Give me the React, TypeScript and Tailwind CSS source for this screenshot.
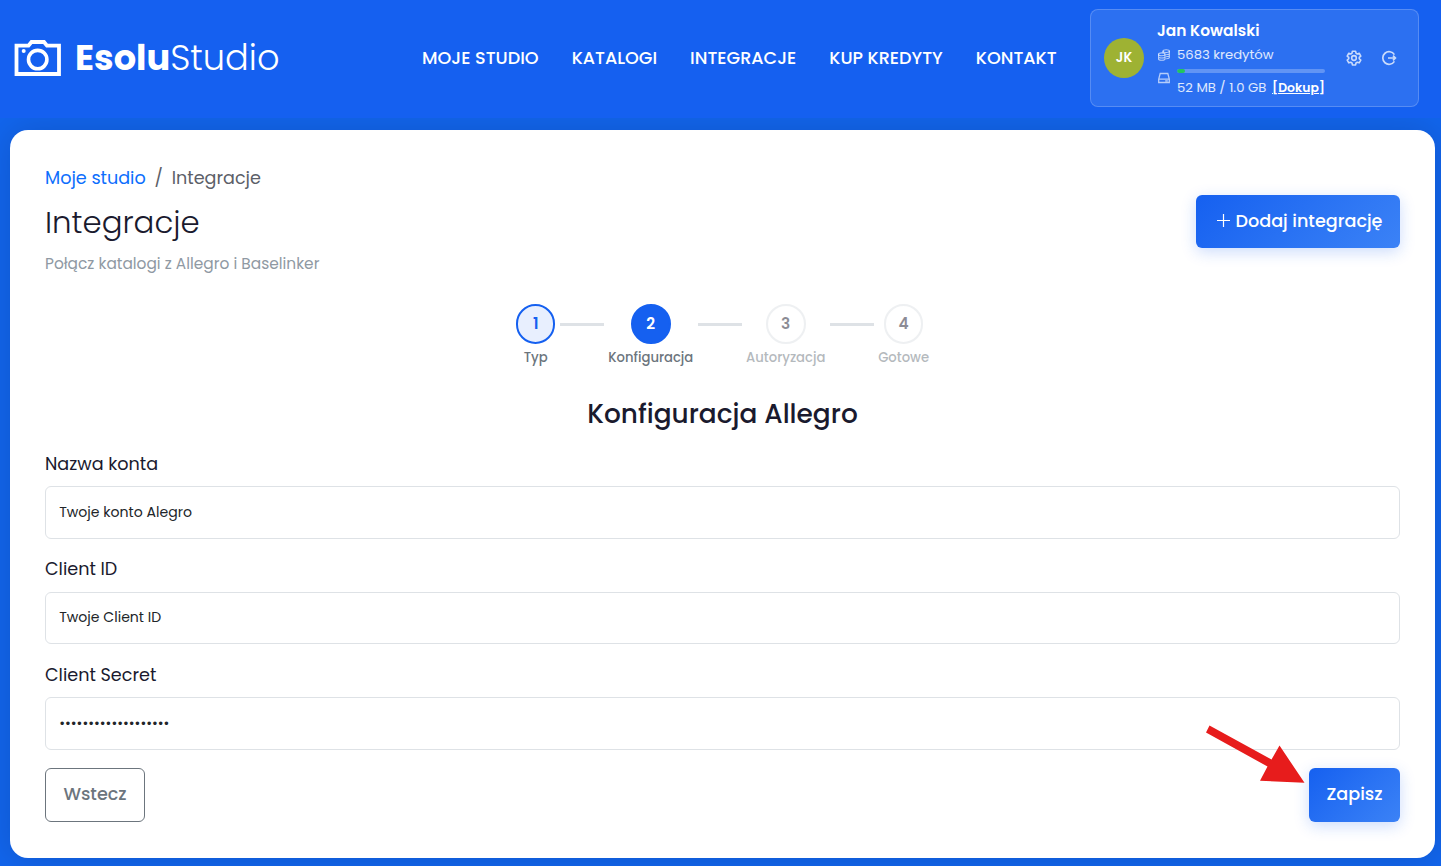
import { Fragment } from "react";
import type { JSX } from "react";

const navItems = [
  "Moje studio",
  "Katalogi",
  "Integracje",
  "Kup kredyty",
  "Kontakt",
];

const steps = [
  {
    id: 1,
    label: "Typ",
    circle: "border-[#1560f0] bg-[#e8effe] text-[#1560f0]",
    opacity: "opacity-100",
  },
  {
    id: 2,
    label: "Konfiguracja",
    circle: "border-[#1560f0] bg-[#1560f0] text-white",
    opacity: "opacity-100",
  },
  {
    id: 3,
    label: "Autoryzacja",
    circle: "border-[#dee2e6] bg-white text-[#1a1a2e]",
    opacity: "opacity-50",
  },
  {
    id: 4,
    label: "Gotowe",
    circle: "border-[#dee2e6] bg-white text-[#1a1a2e]",
    opacity: "opacity-50",
  },
];

const fields = [
  { id: "name", label: "Nazwa konta", type: "text", value: "Twoje konto Alegro" },
  { id: "client-id", label: "Client ID", type: "text", value: "Twoje Client ID" },
  { id: "secret", label: "Client Secret", type: "password", value: "abcdefghijklmnopqrs" },
];

const CameraIcon = (): JSX.Element => (
  <svg className="h-9 w-[47px] shrink-0" viewBox="0 0 47 36" fill="none" stroke="white">
    <path d="M2.5 5.7h12l3-3.7h12.500l3 3.7h12V34h-42.500z" strokeWidth="3.8" />
    <circle cx="23.7" cy="19.600" r="9.200" strokeWidth="3.6" />
    <circle cx="9.700" cy="11" r="2" fill="white" stroke="none" />
  </svg>
);

const CoinsIcon = (): JSX.Element => (
  <svg className="h-3 w-3" viewBox="0 0 12 12" fill="none" stroke="currentColor" strokeWidth="1.1">
    <ellipse cx="8.2" cy="2.1" rx="3.2" ry="1.4" />
    <path d="M5 2.1v2M11.4 2.1v6.2c0 .8-1.4 1.4-3.2 1.4M11.4 4.2c0 .8-1.4 1.4-3.2 1.4M11.4 6.2c0 .8-1.4 1.4-3.2 1.4" />
    <ellipse cx="3.8" cy="5.3" rx="3.3" ry="1.4" />
    <path d="M.5 5.3v4.5c0 .8 1.5 1.5 3.3 1.5s3.3-.7 3.3-1.5V5.3M.5 7.5C.5 8.3 2 9 3.8 9s3.3-.7 3.3-1.5" />
  </svg>
);

const DiskIcon = (): JSX.Element => (
  <svg className="h-3 w-3" viewBox="0 0 12 12" fill="none" stroke="currentColor" strokeWidth="1.3">
    <path d="M.7 7.2 2.2 1.5h7.6l1.5 5.700v3.300H.7zM.7 7.200h10.600M7.200 8.900h2.600" />
  </svg>
);

const GearIcon = (): JSX.Element => (
  <svg className="h-4 w-4" viewBox="0 0 24 24" fill="none" stroke="currentColor" strokeWidth="2.4" strokeLinejoin="round">
    <path d="M9.6 1.8h4.8l.6 3 1.9 1.1 2.9-1 2.4 4.2-2.3 2v2l2.3 2-2.4 4.2-2.9-1-1.9 1.1-.6 3H9.6l-.6-3-1.9-1.1-2.9 1-2.4-4.2 2.3-2v-2l-2.3-2 2.4-4.200 2.9 1L9 4.8z" />
    <circle cx="12" cy="12" r="3.5" />
  </svg>
);

const LogoutIcon = (): JSX.Element => (
  <svg className="h-4 w-4" viewBox="0 0 16 16" fill="none" stroke="currentColor" strokeWidth="1.7">
    <path d="M13.400 4.600A6.300 6.300 0 1 0 13.400 11.400M7 8h7.300M12 5.600 14.400 8 12 10.400" />
  </svg>
);

const UserPanel = (): JSX.Element => (
  <div className="flex h-[98px] w-[329px] items-center rounded-lg border border-white/20 bg-white/10 pl-[13px]">
    <div className="flex size-10 shrink-0 items-center justify-center rounded-full bg-[#9eb233] text-[13.2px] font-semibold text-white">
      JK
    </div>
    <div className="ml-[13px] w-[168px]">
      <div className="text-[15.4px] leading-[23px] font-semibold text-white">
        Jan Kowalski
      </div>
      <div className="mt-[3px] flex items-center gap-[7px] pl-px text-[13.2px] leading-5 text-white/85">
        <span className="text-white/65">
          <CoinsIcon />
        </span>
        <span>5683 kredytów</span>
      </div>
      <div className="mt-1 flex items-start gap-[7px] pl-px">
        <span className="mt-[3px] text-white/65">
          <DiskIcon />
        </span>
        <div className="w-[148px]">
          <div className="h-1 overflow-hidden rounded-sm bg-white/25">
            <div className="h-full w-2 rounded-sm bg-[#22c55e]" />
          </div>
          <div className="mt-[5px] -mb-px flex items-center justify-between whitespace-nowrap text-[13.2px] leading-5 text-white/85">
            <span>52 MB / 1.0 GB</span>
            <a className="text-[12.4px] leading-[18px] font-semibold text-white underline">
              [Dokup]
            </a>
          </div>
        </div>
      </div>
    </div>
    <div className="mb-px ml-[21px] flex gap-[19px] text-white/75">
      <GearIcon />
      <LogoutIcon />
    </div>
  </div>
);

const Header = (): JSX.Element => (
  <header className="relative z-10 flex h-[118px] items-start bg-[#1560f0] pt-[9px] pl-3.5">
    <div className="flex h-[98px] w-[408px] items-center">
      <CameraIcon />
      <div className="ml-3.5 text-[35.2px] leading-none font-light text-white">
        <span className="font-bold">Esolu</span>Studio
      </div>
    </div>
    <nav className="flex h-[98px] w-[668px] items-center gap-[33px] text-[17.6px] font-medium text-white uppercase">
      {navItems.map((item) => (
        <a key={item} className="whitespace-nowrap">
          {item}
        </a>
      ))}
    </nav>
    <UserPanel />
  </header>
);

const Stepper = (): JSX.Element => (
  <div className="mt-[28.8px] flex items-start justify-center gap-[4.4px]">
    {steps.map((step, i) => (
      <Fragment key={step.id}>
        {i > 0 && <div className="mt-[19px] h-[3px] w-11 bg-[#dee2e6]" />}
        <div className={`flex flex-col items-center ${step.opacity}`}>
          <div
            className={`flex size-[39.6px] items-center justify-center rounded-full border-2 text-[15.4px] font-semibold ${step.circle}`}
          >
            {step.id}
          </div>
          <span className="mt-1 text-[13.2px] leading-5 font-medium text-[#6c757d]">
            {step.label}
          </span>
        </div>
      </Fragment>
    ))}
  </div>
);

export default function App(): JSX.Element {
  return (
    <div className="h-[866px] w-[1441px] overflow-hidden bg-[#1265ec] font-['Poppins','Inter',sans-serif] text-[17.6px] leading-[26.4px] text-[#1a1a2e]">
      <Header />
      <main className="relative mt-3 ml-2.5 h-[728px] w-[1425px] rounded-[18px] bg-white p-[35px] shadow-[0_0_35px_rgba(0,0,0,0.15)]">
        <div className="flex items-start justify-between">
          <div>
            <div className="flex gap-[8.8px] text-[#5c6068]">
              <a className="text-[#0d6efd]">Moje studio</a>
              <span>/</span>
              <span>Integracje</span>
            </div>
            <h1 className="mt-[13px] text-[30.8px] leading-[37px] font-light">
              Integracje
            </h1>
            <p className="mt-[11px] text-[15.4px] leading-[23px] text-[#8f99a3]">
              Połącz katalogi z Allegro i Baselinker
            </p>
          </div>
          <button className="mt-[30px] flex h-[53px] w-[204px] items-center justify-center gap-1.5 rounded-md bg-linear-135 from-[#1560f0] to-[#3b82f6] pl-[3px] font-medium text-white shadow-[0_4px_15px_rgba(21,96,240,0.22)]">
            <svg className="mb-0.5 size-[13px]" viewBox="0 0 13 13" stroke="white" strokeWidth="1.2">
              <path d="M6.5 0v13M0 6.5h13" />
            </svg>
            Dodaj integrację
          </button>
        </div>

        <Stepper />

        <h2 className="mt-[30px] text-center text-[26.4px] leading-8 font-medium">
          Konfiguracja Allegro
        </h2>

        <form className="mt-[21px]">
          {fields.map((field) => (
            <div key={field.id} className="mb-[17.6px]">
              <label htmlFor={field.id} className="block">
                {field.label}
              </label>
              <input
                id={field.id}
                type={field.type}
                defaultValue={field.value}
                className="mt-[8.8px] block h-[52.8px] w-full rounded-md border border-[#dee2e6] px-[13.2px] text-[14.08px] text-[#212529]"
              />
            </div>
          ))}
          <div className="flex justify-between">
            <button
              type="button"
              className="h-[54px] w-[100px] rounded-md border border-[#6c757d] font-medium text-[#6c757d]"
            >
              Wstecz
            </button>
            <button
              type="button"
              className="h-[54px] w-[91px] rounded-md bg-linear-135 from-[#1560f0] to-[#3b82f6] font-medium text-white shadow-[0_4px_15px_rgba(21,96,240,0.22)]"
            >
              Zapisz
            </button>
          </div>
        </form>

        {/* pointer drawn over the form, aimed at the save button */}
        <svg
          className="absolute top-[594px] left-[1195px] h-[60px] w-[100px]"
          viewBox="0 0 100 60"
          fill="#e71c1c"
        >
          <path d="M4.5 1.5 66.5 35.5 74.5 21.5 99.5 58.8 55 56.7 62.5 42.5 1 8.5z" />
        </svg>
      </main>
    </div>
  );
}
